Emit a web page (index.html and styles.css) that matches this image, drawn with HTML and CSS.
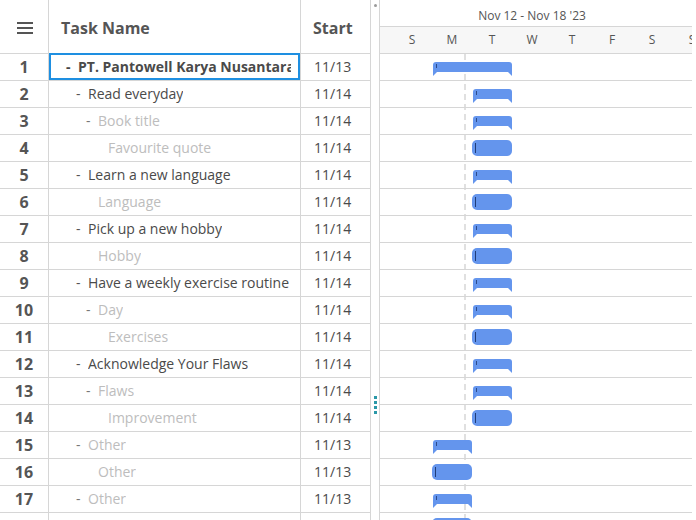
FILE: index.html
```html
<!DOCTYPE html>
<html lang="en">
<head>
<meta charset="utf-8">
<title>Gantt</title>
<link rel="stylesheet" href="styles.css">
</head>
<body>
<div class="app">
  <div class="grid">
    <div class="g-head">
      <div class="c num">
        <svg class="ham" width="16" height="12" viewBox="0 0 16 12"><rect x="0" y="0" width="16" height="2" fill="#555"/><rect x="0" y="5" width="16" height="2" fill="#555"/><rect x="0" y="10" width="16" height="2" fill="#555"/></svg>
      </div>
      <div class="c name">Task Name</div>
      <div class="c start">Start</div>
    </div>
    <div class="g-row"><div class="c num">1</div><div class="c name sel lvl0 bold"><span class="tg">-</span><span class="t">PT. Pantowell Karya Nusantara</span></div><div class="c start">11/13</div></div>
    <div class="g-row"><div class="c num">2</div><div class="c name lvl1"><span class="tg">-</span><span class="t">Read everyday</span></div><div class="c start">11/14</div></div>
    <div class="g-row"><div class="c num">3</div><div class="c name lvl2 muted"><span class="tg">-</span><span class="t">Book title</span></div><div class="c start">11/14</div></div>
    <div class="g-row"><div class="c num">4</div><div class="c name lvl3 muted"><span class="tg"></span><span class="t">Favourite quote</span></div><div class="c start">11/14</div></div>
    <div class="g-row"><div class="c num">5</div><div class="c name lvl1"><span class="tg">-</span><span class="t">Learn a new language</span></div><div class="c start">11/14</div></div>
    <div class="g-row"><div class="c num">6</div><div class="c name lvl2 muted"><span class="tg"></span><span class="t">Language</span></div><div class="c start">11/14</div></div>
    <div class="g-row"><div class="c num">7</div><div class="c name lvl1"><span class="tg">-</span><span class="t">Pick up a new hobby</span></div><div class="c start">11/14</div></div>
    <div class="g-row"><div class="c num">8</div><div class="c name lvl2 muted"><span class="tg"></span><span class="t">Hobby</span></div><div class="c start">11/14</div></div>
    <div class="g-row"><div class="c num">9</div><div class="c name lvl1"><span class="tg">-</span><span class="t">Have a weekly exercise routine</span></div><div class="c start">11/14</div></div>
    <div class="g-row"><div class="c num">10</div><div class="c name lvl2 muted"><span class="tg">-</span><span class="t">Day</span></div><div class="c start">11/14</div></div>
    <div class="g-row"><div class="c num">11</div><div class="c name lvl3 muted"><span class="tg"></span><span class="t">Exercises</span></div><div class="c start">11/14</div></div>
    <div class="g-row"><div class="c num">12</div><div class="c name lvl1"><span class="tg">-</span><span class="t">Acknowledge Your Flaws</span></div><div class="c start">11/14</div></div>
    <div class="g-row"><div class="c num">13</div><div class="c name lvl2 muted"><span class="tg">-</span><span class="t">Flaws</span></div><div class="c start">11/14</div></div>
    <div class="g-row"><div class="c num">14</div><div class="c name lvl3 muted"><span class="tg"></span><span class="t">Improvement</span></div><div class="c start">11/14</div></div>
    <div class="g-row"><div class="c num">15</div><div class="c name lvl1 muted"><span class="tg">-</span><span class="t">Other</span></div><div class="c start">11/13</div></div>
    <div class="g-row"><div class="c num">16</div><div class="c name lvl2 muted"><span class="tg"></span><span class="t">Other</span></div><div class="c start">11/13</div></div>
    <div class="g-row"><div class="c num">17</div><div class="c name lvl1 muted"><span class="tg">-</span><span class="t">Other</span></div><div class="c start">11/13</div></div>
    <div class="g-row"><div class="c num"></div><div class="c name"></div><div class="c start"></div></div>
  </div>

  <div class="splitter">
    <span class="knob"></span>
    <span class="grip"><i></i><i></i><i></i><i></i></span>
  </div>

  <div class="gantt">
    <div class="tl-head">
      <div class="week"><span class="week-label">Nov 12 - Nov 18 '23</span></div>
      <div class="days"><span>S</span><span>M</span><span>T</span><span>W</span><span>T</span><span>F</span><span>S</span><span>S</span></div>
    </div>
    <div class="tl-body">
      <div class="today"></div>
      <div class="t-row"><div class="bar sum" style="left:53px;width:79px"></div></div>
      <div class="t-row"><div class="bar sum" style="left:93px;width:39px"></div></div>
      <div class="t-row"><div class="bar sum" style="left:93px;width:39px"></div></div>
      <div class="t-row"><div class="bar leaf" style="left:92px;width:40px"></div></div>
      <div class="t-row"><div class="bar sum" style="left:93px;width:39px"></div></div>
      <div class="t-row"><div class="bar leaf" style="left:92px;width:40px"></div></div>
      <div class="t-row"><div class="bar sum" style="left:93px;width:39px"></div></div>
      <div class="t-row"><div class="bar leaf" style="left:92px;width:40px"></div></div>
      <div class="t-row"><div class="bar sum" style="left:93px;width:39px"></div></div>
      <div class="t-row"><div class="bar sum" style="left:93px;width:39px"></div></div>
      <div class="t-row"><div class="bar leaf" style="left:92px;width:40px"></div></div>
      <div class="t-row"><div class="bar sum" style="left:93px;width:39px"></div></div>
      <div class="t-row"><div class="bar sum" style="left:93px;width:39px"></div></div>
      <div class="t-row"><div class="bar leaf" style="left:92px;width:40px"></div></div>
      <div class="t-row"><div class="bar sum" style="left:53px;width:39px"></div></div>
      <div class="t-row"><div class="bar leaf" style="left:52px;width:40px"></div></div>
      <div class="t-row"><div class="bar sum" style="left:53px;width:39px"></div></div>
      <div class="t-row"><div class="bar leaf" style="left:52px;width:40px"></div></div>
    </div>
  </div>
</div>
</body>
</html>
```

FILE: styles.css
```css
* { box-sizing: border-box; }
html, body {
  margin: 0;
  padding: 0;
  height: 520px;
  overflow: hidden;
  background: #fff;
}
body {
  font-family: "Open Sans", "Noto Sans", "Liberation Sans", sans-serif;
  color: #444;
}
.app {
  display: flex;
  width: 696px;
  height: 520px;
  overflow: hidden;
}

/* ---------- left grid ---------- */
.grid {
  width: 371px;
  flex: none;
  display: flex;
  flex-direction: column;
  overflow: hidden;
}
.g-head, .g-row {
  display: grid;
  grid-template-columns: 49px 252px 70px;
  flex: none;
}
.g-head { height: 54px; }
.g-row { height: 27px; }
.c {
  border-right: 1px solid #d6d6d6;
  border-bottom: 1px solid #d6d6d6;
  display: flex;
  align-items: center;
  min-width: 0;
}
.g-row .c { padding-bottom: 1px; }
.g-head .c {
  padding-top: 3px;
  font-weight: 700;
  font-size: 16px;
  color: #555;
}
.g-head .num { justify-content: center; }
.g-head .name { padding-left: 12px; }
.g-head .start { padding-left: 12px; }
.ham { display: block; margin-left: 1px; }

.g-row .num {
  justify-content: center;
  font-weight: 700;
  font-size: 16px;
  color: #555;
}
.g-row .name {
  font-size: 14px;
  color: #4a4a4a;
  padding-right: 9px;
  position: relative;
}
.g-row .start {
  font-size: 14px;
  color: #4a4a4a;
  padding-left: 13px;
}
.tg {
  width: 12px;
  flex: none;
  color: #555;
}
.t {
  white-space: nowrap;
  overflow: hidden;
  min-width: 0;
}
.lvl0 { padding-left: 17px; }
.lvl1 { padding-left: 27px; }
.lvl2 { padding-left: 37px; }
.lvl3 { padding-left: 47px; }
.bold { font-weight: 700; }
.bold .tg { color: #444; }
.muted .t { color: #bdbdbd; }
.muted .tg { color: #777; }
.sel::after {
  content: "";
  position: absolute;
  top: -1px;
  left: 0;
  right: 0;
  bottom: 0;
  border: 2px solid #1e8fe1;
  pointer-events: none;
}

/* ---------- splitter ---------- */
.splitter {
  width: 8px;
  flex: none;
  display: flex;
  flex-direction: column;
  align-items: center;
  padding-top: 4px;
}
.knob {
  width: 3px;
  height: 3px;
  border-radius: 50%;
  background: #9a9a9a;
  flex: none;
}
.grip {
  margin-top: 389px;
  display: flex;
  flex-direction: column;
  gap: 2px;
  flex: none;
}
.grip i {
  display: block;
  width: 3px;
  height: 3px;
  background: #2a98a8;
}

/* ---------- gantt ---------- */
.gantt {
  width: 313px;
  flex: none;
  border-left: 1px solid #d6d6d6;
  display: flex;
  flex-direction: column;
  overflow: hidden;
}
.tl-head { flex: none; }
.week {
  height: 27px;
  border-bottom: 1px solid #d6d6d6;
  padding-left: 12px;
  padding-top: 8px;
  font-size: 12px;
  line-height: 16px;
  color: #555;
}
.week-label {
  display: block;
  width: 280px;
  text-align: center;
}
.days {
  height: 27px;
  border-bottom: 1px solid #d6d6d6;
  background: #f7f7f7;
  display: flex;
  padding-left: 12px;
  font-size: 12px;
  line-height: 26px;
  color: #555;
  white-space: nowrap;
}
.days span {
  width: 40px;
  flex: none;
  text-align: center;
}
.tl-body {
  position: relative;
  flex: 1;
}
.today {
  position: absolute;
  left: 84px;
  top: 0;
  bottom: 0;
  width: 2px;
  background: repeating-linear-gradient(to bottom, #e0e0e0 0 6px, transparent 6px 10px);
}
.t-row {
  height: 27px;
  border-bottom: 1px solid #d6d6d6;
  position: relative;
}
.bar {
  position: absolute;
  background: #6495ed;
}
.bar.sum {
  top: 8px;
  height: 10px;
  border-radius: 3px 3px 0 0;
  background: linear-gradient(#2b4a8a, #2b4a8a) 3px 2px / 1px 4px no-repeat, #6495ed;
}
.bar.sum::before,
.bar.sum::after {
  content: "";
  position: absolute;
  top: 10px;
  width: 0;
  height: 0;
  border-top: 4px solid #6495ed;
}
.bar.sum::before {
  left: 0;
  border-right: 4px solid transparent;
}
.bar.sum::after {
  right: 0;
  border-left: 4px solid transparent;
}
.bar.leaf {
  top: 5px;
  height: 16px;
  border-radius: 5px;
}
.bar.leaf::before {
  content: "";
  position: absolute;
  left: 3px;
  top: 3px;
  width: 1px;
  height: 10px;
  background: #1f3c78;
}
```
